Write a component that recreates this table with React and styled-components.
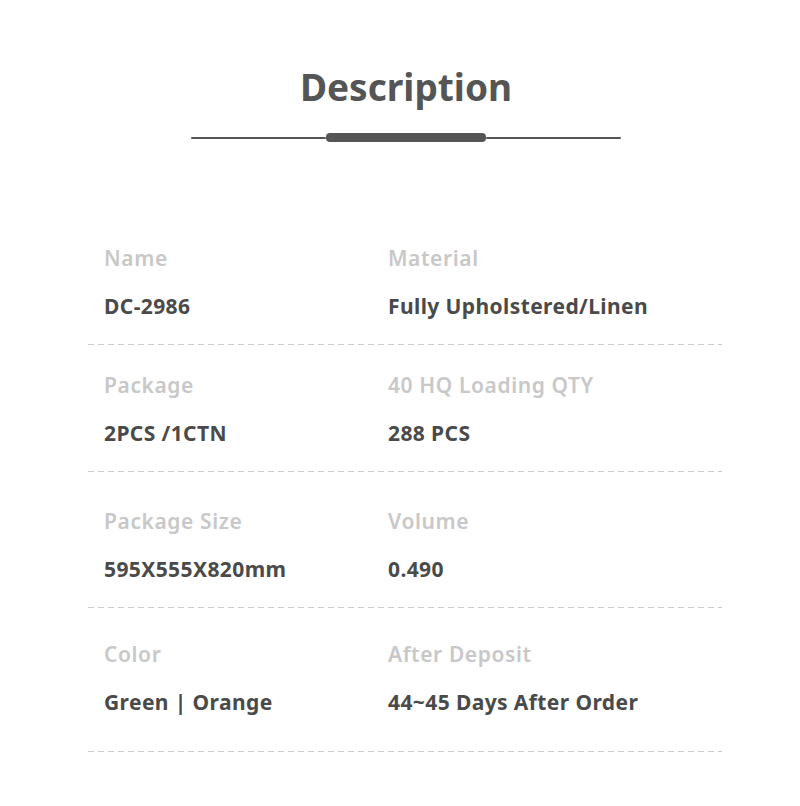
import styled, { createGlobalStyle } from "styled-components";

const GlobalStyle = createGlobalStyle`
    body{
        margin: 0;
        background: #ffffff;
        font-family: "Noto Sans", "Open Sans", Arial, sans-serif;
    }
`

const Page = styled.div`
    width: 800px;
    height: 806px;
    background: #ffffff;
    display: flex;
    flex-direction: column;
    align-items: center;
`

const Title = styled.h1`
    margin: 62px 0 0 12px;
    font-size: 37px;
    line-height: 50px;
    font-weight: 700;
    color: #555555;
`

const Divider = styled.div`
    margin: 21px 0 0 11px;
    width: 430px;
    height: 9px;
    display: flex;
    align-items: center;

    .Divider__Thin{
        flex: 1;
        height: 2px;
        background: #555555;
        border-radius: 1px;
    }

    .Divider__Thick{
        width: 160px;
        height: 9px;
        background: #555555;
        border-radius: 4px;
    }
`

const Table = styled.div`
    margin: 102px 0 0 10px;
    width: 634px;
    display: flex;
    flex-direction: column;
`

const Row = styled.div`
    display: grid;
    grid-template-columns: 284px 1fr;
    padding: ${p => p.$top}px 0 ${p => p.$bottom}px 16px;
    background-image: linear-gradient(to right, #cccccc 6px, transparent 6px);
    background-size: 10px 1px;
    background-repeat: repeat-x;
    background-position: left bottom;
`

const Cell = styled.div`
    display: flex;
    flex-direction: column;
    gap: 20px;

    .Cell__Label{
        font-size: 21px;
        line-height: 28px;
        letter-spacing: 0.6px;
        font-weight: 600;
        color: #c8c8c8;
    }

    .Cell__Value{
        font-size: 21px;
        line-height: 28px;
        letter-spacing: 0.4px;
        font-weight: 700;
        color: #4a4a4a;
    }
`

const rows = [
    { top: 0, bottom: 25, items: [["Name", "DC-2986"], ["Material", "Fully Upholstered/Linen"]] },
    { top: 26, bottom: 25, items: [["Package", "2PCS /1CTN"], ["40 HQ Loading QTY", "288 PCS"]] },
    { top: 35, bottom: 25, items: [["Package Size", "595X555X820mm"], ["Volume", "0.490"]] },
    { top: 32, bottom: 36, items: [["Color", "Green | Orange"], ["After Deposit", "44~45 Days After Order"]] },
]

const App = () => {
    return <Page>
        <GlobalStyle />
        <Title>Description</Title>
        <Divider>
            <div className="Divider__Thin"></div>
            <div className="Divider__Thick"></div>
            <div className="Divider__Thin"></div>
        </Divider>

        <Table>
            {rows.map((row, i) => (
                <Row key={i} $top={row.top} $bottom={row.bottom}>
                    {row.items.map(([label, value]) => (
                        <Cell key={label}>
                            <span className="Cell__Label">{label}</span>
                            <span className="Cell__Value">{value}</span>
                        </Cell>
                    ))}
                </Row>
            ))}
        </Table>
    </Page>
}

export default App;
